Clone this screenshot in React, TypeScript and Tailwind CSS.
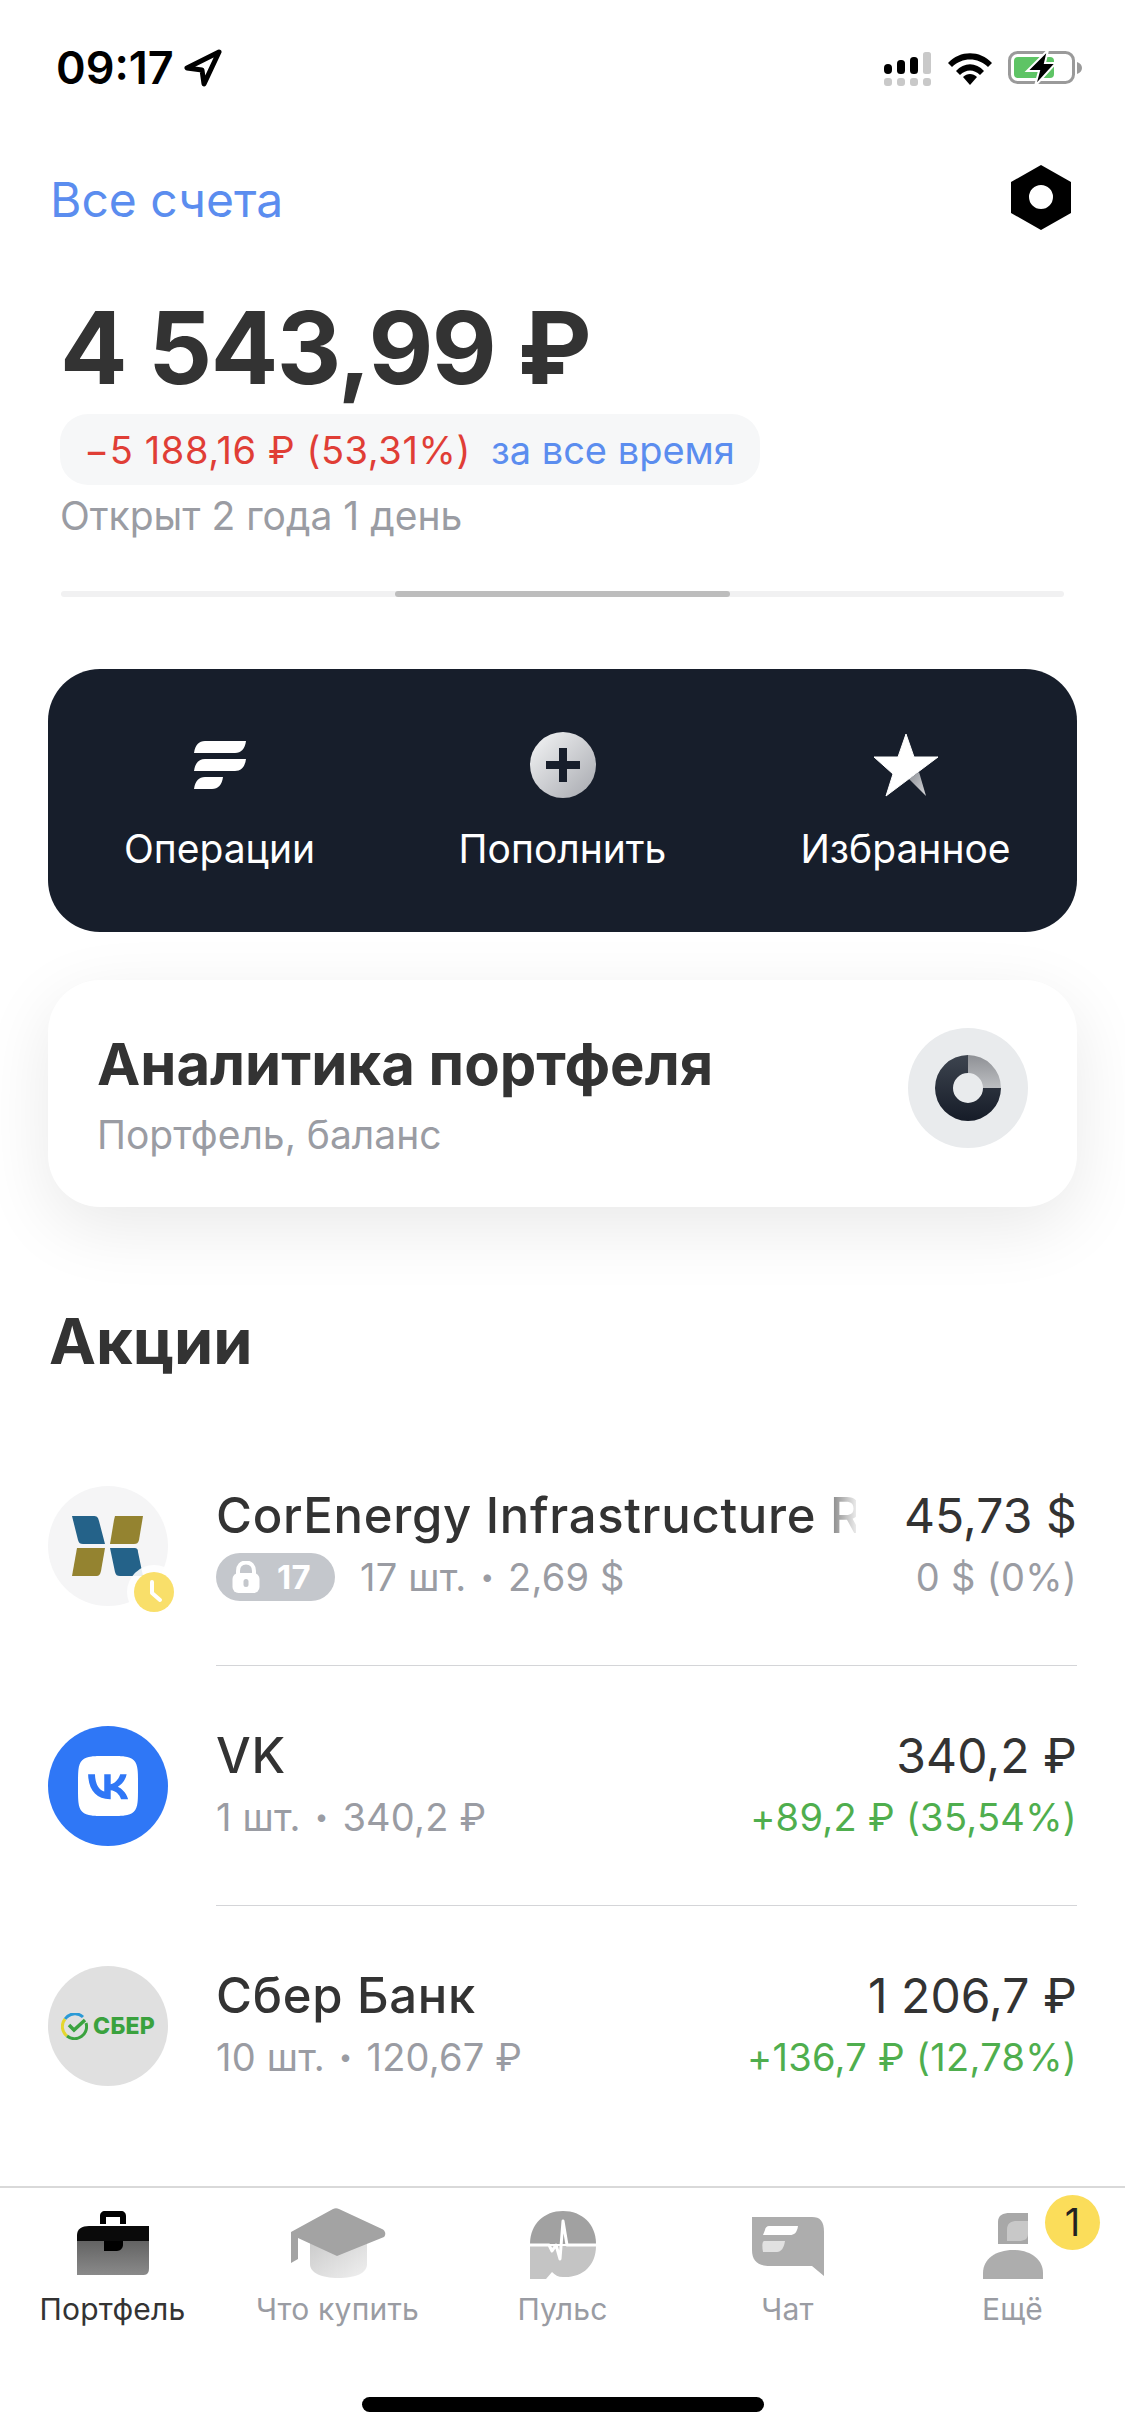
import React from "react";
import { SiVk } from "react-icons/si";

function StatusIcons() {
  return (
    <div className="flex items-center">
      <svg width="48" height="36" viewBox="0 0 48 36" className="mr-[16px]">
        <rect x="1" y="14" width="8" height="10" rx="4" fill="#000" />
        <rect x="14" y="10" width="8" height="14" rx="3.5" fill="#000" />
        <rect x="27" y="7" width="8" height="17" rx="3.5" fill="#000" />
        <rect x="40" y="2" width="8" height="22" rx="2.5" fill="#c9c9c9" />
        <rect x="1" y="28" width="8" height="8" rx="3" fill="#c9c9c9" />
        <rect x="14" y="28" width="8" height="8" rx="3" fill="#c9c9c9" />
        <rect x="27" y="28" width="8" height="8" rx="3" fill="#c9c9c9" />
        <rect x="40" y="28" width="8" height="8" rx="3" fill="#c9c9c9" />
      </svg>
      <svg width="46" height="34" viewBox="0 0 46 34" className="mr-[15px]">
        <path d="M1 12C13 -1 33 -1 45 12L41 16C31 6 15 6 5 16Z" fill="#000" />
        <path d="M9 20C17 11 29 11 37 20L33 24C27 18 19 18 13 24Z" fill="#000" />
        <path d="M16 26C20 22 26 22 30 26L23 34Z" fill="#000" />
      </svg>
      <svg width="74" height="36" viewBox="0 0 74 36">
        <rect x="1.5" y="2.5" width="64" height="30" rx="8" fill="none" stroke="#9a9a9a" strokeWidth="3" />
        <rect x="6" y="7" width="40" height="21" rx="4" fill="#5ec465" />
        <path d="M69 12C72 13 74 15 74 18C74 21 72 23 69 24Z" fill="#9a9a9a" />
        <path d="M40 0L19 21H31L27 36L48 13H37Z" fill="#000" stroke="#fff" strokeWidth="2" />
      </svg>
    </div>
  );
}

function OperationsIcon() {
  return (
    <svg width="52" height="48" viewBox="0 0 52 48">
      <path d="M11 0H52C51 8 47 12 41 12H0C1 4 5 0 11 0Z" fill="#fff" />
      <path d="M11 18H52C51 26 47 30 41 30H0C1 22 5 18 11 18Z" fill="#fff" />
      <path d="M11 36H29C28 44 24 48 18 48H0C1 40 5 36 11 36Z" fill="#fff" />
    </svg>
  );
}

function PlusIcon() {
  return (
    <svg width="66" height="66" viewBox="0 0 66 66">
      <defs>
        <linearGradient id="plusFill" x1="0" y1="0" x2="1" y2="1">
          <stop offset="0" stopColor="#f5f6f7" />
          <stop offset="1" stopColor="#a6a8ae" />
        </linearGradient>
      </defs>
      <circle cx="33" cy="33" r="33" fill="url(#plusFill)" />
      <path d="M29 16H37V29H50V37H37V50H29V37H16V29H29Z" fill="#171e2b" />
    </svg>
  );
}

function StarIcon() {
  return (
    <svg width="66" height="63" viewBox="0 0 66 63">
      <defs>
        <linearGradient id="starLeg" x1="0" y1="0" x2="1" y2="1">
          <stop offset="0" stopColor="#8d9096" />
          <stop offset="1" stopColor="#d5d6d9" />
        </linearGradient>
      </defs>
      <path d="M46 38L53 62L36 45Z" fill="url(#starLeg)" />
      <path d="M33 0L41 23H65L13 62L20 40L1 23H25Z" fill="#fff" stroke="#fff" strokeLinejoin="round" />
    </svg>
  );
}

function DonutIcon() {
  return (
    <svg width="66" height="66" viewBox="0 0 66 66">
      <defs>
        <linearGradient id="donutDark" x1="0" y1="0" x2="0" y2="1">
          <stop offset="0" stopColor="#3d444f" />
          <stop offset="1" stopColor="#161c28" />
        </linearGradient>
        <linearGradient id="donutLight" x1="0" y1="0" x2="0" y2="1">
          <stop offset="0" stopColor="#8e9095" />
          <stop offset="1" stopColor="#bcbec1" />
        </linearGradient>
      </defs>
      <path d="M33 0A33 33 0 1 0 66 33H48A15 15 0 1 1 33 18Z" fill="url(#donutDark)" />
      <path d="M33 0A33 33 0 0 1 66 33H48A15 15 0 0 0 33 18Z" fill="url(#donutLight)" />
    </svg>
  );
}

function CorEnergyLogo() {
  return (
    <div className="relative w-[120px] h-[120px] shrink-0">
      <div className="w-full h-full rounded-full bg-[#f5f5f6] flex items-center justify-center">
        <svg width="120" height="120" viewBox="0 0 120 120">
          <path d="M24 30H45C49 30 50 31 51 35L57 58H35C32 58 31 57 30 54Z" fill="#246289" />
          <path d="M67 30H95L91 54C90 57 89 58 86 58H62L66 34Z" fill="#948330" />
          <path d="M29 62H57L53 85C52 89 51 90 48 90H24Z" fill="#948330" />
          <path d="M62 62H86C89 62 90 63 90 66L95 90H72C69 90 68 89 67 86Z" fill="#246289" />
        </svg>
      </div>
      <div className="absolute left-[79px] top-[79px] w-[54px] h-[54px] rounded-full bg-white/90 flex items-center justify-center">
        <svg width="40" height="40" viewBox="0 0 40 40">
          <circle cx="20" cy="20" r="20" fill="#f9df6a" />
          <path d="M18 10V21L26 28" fill="none" stroke="#fff" strokeWidth="4" strokeLinecap="round" strokeLinejoin="round" />
        </svg>
      </div>
    </div>
  );
}

function VkLogo() {
  return (
    <div className="w-[120px] h-[120px] shrink-0 rounded-full bg-[#2f77f6] flex items-center justify-center">
      <SiVk className="w-[60px] h-[60px] text-white" />
    </div>
  );
}

function SberLogo() {
  return (
    <div className="w-[120px] h-[120px] shrink-0 rounded-full bg-[#e0e0e0] flex items-center justify-center gap-[5px]">
      <svg width="27" height="27" viewBox="0 0 27 27">
        <path d="M22 4A12 12 0 0 0 4 6" fill="none" stroke="#2b9ad6" strokeWidth="3" />
        <path d="M4 6A12 12 0 0 0 6 23" fill="none" stroke="#e4d62e" strokeWidth="3" />
        <path d="M6 23A12 12 0 0 0 25 10" fill="none" stroke="#3ba33f" strokeWidth="3" />
        <path d="M8 12L13 17L24 7" fill="none" stroke="#3ba33f" strokeWidth="3.5" />
      </svg>
      <span className="text-[23px] leading-none font-extrabold text-[#3aa23e] tracking-[0.2px]">СБЕР</span>
    </div>
  );
}

function LockPill() {
  return (
    <div className="w-[119px] h-[48px] rounded-full bg-[#c4c7cc] flex items-center pl-[16px] gap-[17px] shrink-0">
      <svg width="28" height="32" viewBox="0 0 28 32">
        <path d="M6 13V10C6 5 9 1.500 14 1.500C19 1.500 22 5 22 10V13" fill="none" stroke="#fff" strokeWidth="4" />
        <rect x="0.500" y="12" width="27" height="20" rx="6" fill="#fff" />
        <rect x="11.500" y="18" width="5" height="8" rx="2.500" fill="#c4c7cc" />
      </svg>
      <span className="text-[33px] leading-none font-bold text-white">17</span>
    </div>
  );
}

function BriefcaseIcon() {
  return (
    <svg width="72" height="72" viewBox="0 0 72 72">
      <defs>
        <linearGradient id="caseBody" x1="0" y1="0" x2="0" y2="1">
          <stop offset="0" stopColor="#636363" />
          <stop offset="1" stopColor="#8a8a8a" />
        </linearGradient>
      </defs>
      <path d="M23 16V8C23 5 25 3 28 3H44C47 3 49 5 49 8V16H43V9H29V16Z" fill="#000" />
      <path d="M0 33H72V60C72 67 69 67 62 67H0Z" fill="url(#caseBody)" />
      <path d="M0 27C0 21 5 18 12 18H72V33H0Z" fill="#0a0a0a" />
      <path d="M27 33H46V37C46 40 43 43 40 43H27Z" fill="#000" />
    </svg>
  );
}

function CapIcon() {
  return (
    <svg width="96" height="72" viewBox="0 0 96 72">
      <defs>
        <linearGradient id="capBody" x1="0" y1="0" x2="1" y2="1">
          <stop offset="0" stopColor="#c9c9c9" />
          <stop offset="1" stopColor="#f0f0f0" />
        </linearGradient>
      </defs>
      <path d="M20 30H77V56C77 65 66 70 48 70C32 70 20 65 20 56Z" fill="url(#capBody)" />
      <path d="M1 24L43 1C45 0 47 0 49 1L92 21C96 23 96 27 94 29L47 48L8 30V51L1 55Z" fill="#a3a3a3" />
    </svg>
  );
}

function PulseIcon() {
  return (
    <svg width="66" height="72" viewBox="0 0 66 72">
      <path d="M0 38H66C66 58 52 70 33 69C28 69 25 67 22 64L16 71H0Z" fill="#c4c4c4" />
      <path d="M0 36C0 16 14 3 33 3C52 3 66 16 66 36Z" fill="#a1a1a1" />
      <path d="M0 37H19L22 43L26 37L30 51L33 13L37 37H66" fill="none" stroke="#fff" strokeWidth="3" strokeLinejoin="round" />
    </svg>
  );
}

function ChatIcon() {
  return (
    <svg width="72" height="72" viewBox="0 0 72 72">
      <path d="M0 9H60C68 9 72 13 72 24V68L60 58H18C6 58 0 53 0 42Z" fill="#adadad" />
      <path d="M13 22C13 20 15 18 17 18H46C45 25 42 27 38 27H11Z" fill="#fff" />
      <path d="M12 33H33C32 40 29 44 25 44H11C10 38 10 34 12 33Z" fill="#e1e1e1" />
    </svg>
  );
}

function PersonIcon() {
  return (
    <svg width="60" height="72" viewBox="0 0 60 72">
      <path d="M15 14C15 7 20 5 27 5H45V36H15Z" fill="#a8a8a8" />
      <path d="M24 22C24 15 28 13 34 13H45V26C45 31 41 33 36 33H24Z" fill="#c8c8c8" />
      <path d="M30 42C47 42 60 51 60 65V71H0V65C0 51 13 42 30 42Z" fill="#adadad" />
    </svg>
  );
}

function TabItem({ icon, label, active }: { icon: React.ReactNode; label: string; active?: boolean }) {
  return (
    <div className="flex flex-col items-center">
      <div className="h-[72px] flex items-center justify-center">{icon}</div>
      <span className={`mt-[11px] text-[30px] tracking-[0.2px] leading-[36px] ${active ? "text-[#333]" : "text-[#9a9ca3]"}`}>{label}</span>
    </div>
  );
}

interface Holding {
  name: string;
  count: string;
  price: string;
  value: string;
  change: string;
  changeColor: string;
  logo: React.ReactNode;
  pill?: boolean;
  fade?: boolean;
}

const holdings: Holding[] = [
  {
    name: "CorEnergy Infrastructure R",
    count: "17 шт.",
    price: "2,69 $",
    value: "45,73 $",
    change: "0 $ (0%)",
    changeColor: "text-[#9a9ca3]",
    logo: <CorEnergyLogo />,
    pill: true,
    fade: true,
  },
  {
    name: "VK",
    count: "1 шт.",
    price: "340,2 ₽",
    value: "340,2 ₽",
    change: "+89,2 ₽ (35,54%)",
    changeColor: "text-[#4fae4e]",
    logo: <VkLogo />,
  },
  {
    name: "Сбер Банк",
    count: "10 шт.",
    price: "120,67 ₽",
    value: "1 206,7 ₽",
    change: "+136,7 ₽ (12,78%)",
    changeColor: "text-[#4fae4e]",
    logo: <SberLogo />,
  },
];

function HoldingRow({ item }: { item: Holding }) {
  return (
    <div className="flex items-center px-[48px] h-[120px]">
      {item.logo}
      <div className="ml-[48px] flex-1 flex justify-between">
        <div className="flex flex-col min-w-0">
          <div className={`h-[60px] flex items-center text-[49px] font-medium tracking-[0.7px] text-[#333] whitespace-nowrap ${item.fade ? "w-[640px] [mask-image:linear-gradient(to_left,rgba(0,0,0,0.1),black_45px)]" : ""}`}>
            {item.name}
          </div>
          <div className="h-[60px] pt-[2px] flex items-center text-[38px] tracking-[0.2px] text-[#9a9ca3] whitespace-nowrap">
            {item.pill && (
              <span className="mr-[25px]">
                <LockPill />
              </span>
            )}
            {item.count}
            <span className="mx-[14px] text-[24px]">•</span>
            {item.price}
          </div>
        </div>
        <div className="flex flex-col items-end">
          <div className="h-[60px] flex items-center text-[48px] tracking-[0.1px] text-[#333] whitespace-nowrap">{item.value}</div>
          <div className={`h-[60px] pt-[2px] flex items-center text-[38px] tracking-[0.3px] whitespace-nowrap ${item.changeColor}`}>{item.change}</div>
        </div>
      </div>
    </div>
  );
}

export default function App() {
  return (
    <div className="relative w-[1125px] h-[2436px] overflow-hidden bg-white flex flex-col font-['Inter',sans-serif]">
      {/* status bar */}
      <div className="h-[88px] pt-[48px] pl-[56px] pr-[43px] flex items-center justify-between">
        <div className="flex items-center">
          <span className="text-[45px] leading-[40px] font-semibold text-black">09:17</span>
          <svg width="38" height="38" viewBox="0 0 38 38" className="ml-[10px]">
            <path d="M35 3L3 19L18 21L20 35Z" fill="none" stroke="#000" strokeWidth="5" strokeLinejoin="round" />
          </svg>
        </div>
        <StatusIcons />
      </div>

      {/* account header */}
      <div className="mt-[77px] h-[65px] pl-[50px] pr-[54px] flex items-center justify-between">
        <span className="pt-[3px] text-[48px] leading-[65px] text-[#5b8def]">Все счета</span>
        <svg width="60" height="65" viewBox="0 0 60 65">
          <path fillRule="evenodd" d="M30 0L60 17V48L30 65L0 48V17ZM30 20A12 12 0 1 0 30.010 44A12 12 0 1 0 30 20Z" fill="#000" />
        </svg>
      </div>

      <div className="mt-[68px] pl-[60px] h-[99px] text-[100px] leading-[100px] font-bold text-[#333] tracking-[-1.5px]">4 543,99 ₽</div>

      <div className="mt-[17px] ml-[60px] w-[700px] h-[71px] rounded-[28px] bg-[#f6f7f8] pl-[24px] pt-[2px] flex items-center text-[38px]">
        <span className="text-[#e03e36] tracking-[0.6px]">−5 188,16 ₽ (53,31%)</span>
        <span className="ml-[20px] text-[#5b8def]">за все время</span>
      </div>

      <div className="mt-[8px] pl-[60px] text-[39px] leading-[46px] text-[#9a9ca3]">Открыт 2 года 1 день</div>

      <div className="mt-[52px] mx-[61px] h-[6px] rounded-full bg-[#f1f1f2] flex justify-center">
        <div className="w-[335px] h-full rounded-full bg-[#bdbdbd]" />
      </div>

      {/* actions */}
      <div className="mt-[72px] mx-[48px] h-[263px] rounded-[52px] bg-[#171e2b] grid grid-cols-3 pt-[63px]">
        <div className="flex flex-col items-center">
          <div className="h-[66px] flex items-center justify-center"><OperationsIcon /></div>
          <span className="mt-[28px] text-[39px] leading-[46px] text-white">Операции</span>
        </div>
        <div className="flex flex-col items-center">
          <div className="h-[66px] flex items-center justify-center"><PlusIcon /></div>
          <span className="mt-[28px] text-[39px] leading-[46px] text-white">Пополнить</span>
        </div>
        <div className="flex flex-col items-center">
          <div className="h-[66px] flex items-center justify-center"><StarIcon /></div>
          <span className="mt-[28px] text-[39px] leading-[46px] text-white">Избранное</span>
        </div>
      </div>

      {/* analytics */}
      <div className="mt-[48px] mx-[48px] h-[227px] rounded-[52px] bg-white shadow-[0_20px_70px_rgba(0,0,0,0.09)] pl-[49px] pr-[49px] pt-[48px] flex justify-between">
        <div className="pt-[4px]">
          <div className="text-[58px] leading-[64px] font-bold text-[#333]">Аналитика портфеля</div>
          <div className="mt-[16px] text-[39px] leading-[46px] text-[#9a9ca3]">Портфель, баланс</div>
        </div>
        <div className="w-[120px] h-[120px] rounded-full bg-[#e9ebed] flex items-center justify-center">
          <DonutIcon />
        </div>
      </div>

      <div className="mt-[99px] pl-[49px] h-[71px] text-[63px] leading-[70px] font-bold text-[#333]">Акции</div>

      {/* holdings */}
      <div className="mt-[109px] flex flex-col">
        {holdings.map((item, i) => (
          <div key={item.name}>
            <HoldingRow item={item} />
            {i < holdings.length - 1 && <div className="ml-[216px] mr-[48px] mt-[59px] mb-[60px] h-[1px] bg-[#d4d5d8]" />}
          </div>
        ))}
      </div>

      {/* tab bar */}
      <div className="mt-auto border-t-2 border-[#d9d9d9] pt-[20px] pb-[24px]">
        <div className="relative grid grid-cols-5">
          <TabItem icon={<BriefcaseIcon />} label="Портфель" active />
          <TabItem icon={<CapIcon />} label="Что купить" />
          <TabItem icon={<PulseIcon />} label="Пульс" />
          <TabItem icon={<ChatIcon />} label="Чат" />
          <TabItem icon={<PersonIcon />} label="Ещё" />
          <div className="absolute left-[1045px] top-[-13px] w-[55px] h-[55px] rounded-full bg-[#fbdd5a] flex items-center justify-center text-[38px] text-[#222]">1</div>
        </div>
        <div className="mt-[70px] mx-auto w-[402px] h-[15px] rounded-full bg-black" />
      </div>
    </div>
  );
}
